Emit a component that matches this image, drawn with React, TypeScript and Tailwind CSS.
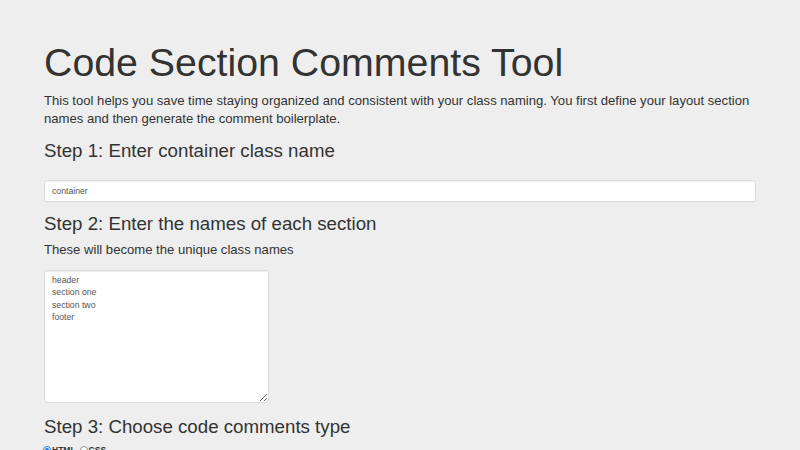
import { useState } from 'react'

const font = { fontFamily: '"Liberation Sans", Arial, Helvetica, sans-serif' }

function Radio({ checked, label, onSelect }: { checked: boolean; label: string; onSelect: () => void }) {
  return (
    <label className="flex cursor-pointer items-center gap-[1px]" onClick={onSelect}>
      <span
        className={
          checked
            ? 'flex h-[8px] w-[8px] items-center justify-center rounded-full border border-[#1a73e8] bg-white'
            : 'flex h-[8px] w-[8px] items-center justify-center rounded-full border border-[#8f8f8f] bg-white'
        }
      >
        {checked && <span className="h-[4px] w-[4px] rounded-full bg-[#1a73e8]" />}
      </span>
      <span className="text-[8.5px] font-bold leading-[12px] text-[#333]">{label}</span>
    </label>
  )
}

export default function App() {
  const [container, setContainer] = useState('container')
  const [sections, setSections] = useState('header\nsection one\nsection two\nfooter')
  const [type, setType] = useState<'html' | 'css'>('html')

  return (
    <div className="min-h-[450px] bg-[#eeeeee] text-[#333]" style={font}>
      <div className="mx-auto w-[712px] pt-[41px]">
        <h1 className="text-[39.3px] leading-[43px] font-normal">Code Section Comments Tool</h1>
        <p className="mt-[8px] text-[13.1px] leading-[18px]">
          This tool helps you save time staying organized and consistent with your class naming. You first define your
          layout section names and then generate the comment boilerplate.
        </p>

        <h3 className="mt-[12px] text-[18.7px] leading-[21px]">Step 1: Enter container class name</h3>
        <input
          className="mt-[19px] block h-[22px] w-full rounded-[3px] border border-[#dadada] bg-white px-[7px] text-[8.7px] text-[#555] shadow-[inset_0_1px_1px_rgba(0,0,0,0.06)] outline-none"
          value={container}
          onChange={(e) => setContainer(e.target.value)}
        />

        <h3 className="mt-[11px] text-[18.7px] leading-[21px]">Step 2: Enter the names of each section</h3>
        <p className="mt-[7px] text-[13.1px] leading-[18px]">These will become the unique class names</p>
        <textarea
          className="mt-[11px] block h-[133px] w-[225px] rounded-[3px] border border-[#dadada] bg-white px-[7px] pt-[3px] text-[8.7px] leading-[12.4px] text-[#555] shadow-[inset_0_1px_1px_rgba(0,0,0,0.06)] outline-none"
          value={sections}
          onChange={(e) => setSections(e.target.value)}
        />

        <h3 className="mt-[13px] text-[18.7px] leading-[21px]">Step 3: Choose code comments type</h3>
        <div className="mt-[7px] -ml-[1px] flex items-center gap-[4px]">
          <Radio checked={type === 'html'} label="HTML" onSelect={() => setType('html')} />
          <Radio checked={type === 'css'} label="CSS" onSelect={() => setType('css')} />
        </div>
      </div>
    </div>
  )
}
